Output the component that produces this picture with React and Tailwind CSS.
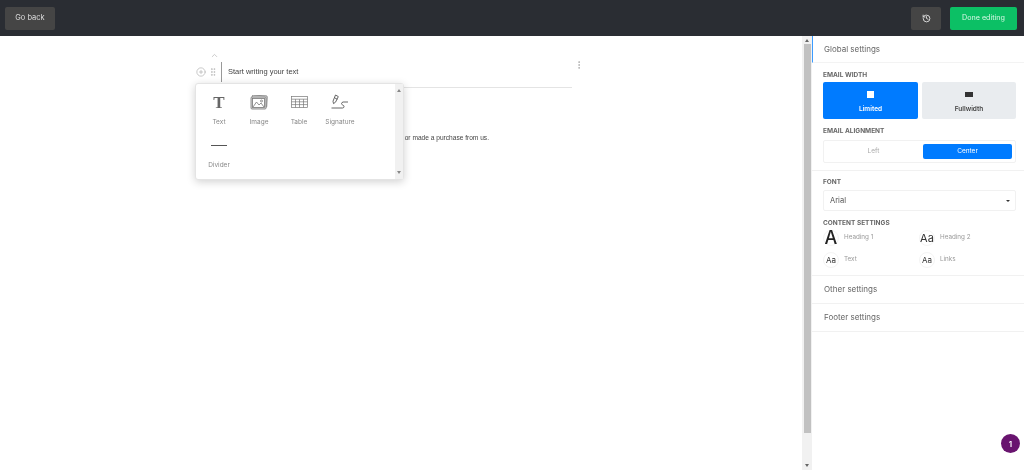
import React from 'react';
import { ChevronUp, CirclePlus, GripVertical, EllipsisVertical, History } from 'lucide-react';

const sans = "font-['Inter',sans-serif]";
const arial = "font-['Liberation_Sans',sans-serif]";

const TextIcon = () => (
  <span className="font-['Liberation_Serif',serif] font-bold text-[17px] leading-none text-[#666]">T</span>
);

const ImageIcon = () => (
  <svg width="18" height="15" viewBox="0 0 18 15" fill="none" stroke="#777" strokeWidth="0.8">
    <rect x="2" y="0.5" width="15" height="11.5" rx="1" transform="rotate(3 9 6)" fill="#ddd" />
    <rect x="1" y="2" width="15" height="12" rx="1" fill="#ddd" />
    <rect x="2.5" y="3.5" width="12" height="9" fill="#fff" />
    <path d="M3 12l3.5-5 2.5 3 2-2 3 4" />
    <circle cx="11.5" cy="6" r="1" />
  </svg>
);

const TableIcon = () => (
  <svg width="17" height="12" viewBox="0 0 17 12" fill="none" stroke="#777" strokeWidth="0.7">
    <rect x="0.5" y="0.5" width="16" height="11" />
    <path d="M0.5 3.2h16M0.5 5.8h16M0.5 8.6h16M4.5 3.2v8.3M8.5 3.2v8.3M12.5 3.2v8.3" />
  </svg>
);

const SignatureIcon = () => (
  <svg width="18" height="16" viewBox="0 0 18 16" fill="none" stroke="#555" strokeWidth="0.9">
    <path d="M4.5 1l2.8 1.6-2.8 5.6-2 1.4-.5-2.4z" />
    <path d="M3.7 3.8l2.6 1.5" />
    <path d="M0.5 14h11c2 0 2-2.5.2-3-1.6-.5-1.6-2.6.4-3H17" />
  </svg>
);

const blocks = [
  { label: 'Text', icon: <TextIcon /> },
  { label: 'Image', icon: <ImageIcon /> },
  { label: 'Table', icon: <TableIcon /> },
  { label: 'Signature', icon: <SignatureIcon />, shift: 'ml-[1px]' },
  { label: 'Divider', icon: <div className="w-4 h-px bg-[#555]" /> },
];

function BlockMenu() {
  return (
    <div className="absolute left-[195px] top-[47px] w-[209px] h-[97px] bg-white rounded-[3px] border border-[#e4e4e4] shadow-[0_2px_8px_rgba(0,0,0,0.18)] flex">
      <div className="flex-1 flex flex-wrap content-start pl-[3px] pt-[9px] gap-y-[8px]">
        {blocks.map((b) => (
          <div key={b.label} className={`w-10 h-[35px] flex flex-col items-center ${b.shift || ''}`}>
            <div className="h-[18px] flex items-center justify-center">{b.icon}</div>
            <span className="mt-[7px] text-[6.5px] leading-[8px] text-[#888] whitespace-nowrap">{b.label}</span>
          </div>
        ))}
      </div>
      <div className="w-2 bg-[#f1f1f1] flex flex-col items-center justify-between py-[5px]">
        <span className="w-0 h-0 border-x-2 border-x-transparent border-b-[3px] border-b-[#888]" />
        <span className="w-0 h-0 border-x-2 border-x-transparent border-t-[3px] border-t-[#888]" />
      </div>
    </div>
  );
}

function Scrollbar() {
  return (
    <div className="w-[10px] bg-[#f1f1f1] flex flex-col items-center shrink-0">
      <div className="h-[8px] flex items-center">
        <span className="w-0 h-0 border-x-[2.5px] border-x-transparent border-b-[3px] border-b-[#666]" />
      </div>
      <div className="w-[7px] h-[389px] bg-[#c1c1c1]" />
      <div className="flex-1" />
      <div className="h-[9px] flex items-center">
        <span className="w-0 h-0 border-x-[2.5px] border-x-transparent border-t-[3px] border-t-[#666]" />
      </div>
    </div>
  );
}

function Canvas() {
  return (
    <main className="relative w-[802px] shrink-0 bg-white">
      <div className="w-[375px] ml-[197px] pt-[16px]">
        <div className="pl-[13px] h-[6px] flex items-center">
          <ChevronUp size={9} className="text-[#bbb]" />
        </div>
        <div className="flex items-center h-[20px] mt-[4px] relative">
          <CirclePlus size={10} className="-ml-[1px] text-[#aaa]" strokeWidth={1.5} />
          <GripVertical size={10} className="ml-[2px] text-[#bbb]" />
          <div className="ml-[3px] w-px h-[20px] bg-[#999]" />
          <span className={`ml-[6px] text-[7.5px] text-[#444] ${arial}`}>Start writing your text</span>
        </div>
        <div className="h-px bg-[#e4e4e4] mt-[5px]" />
        <p className={`mt-[45px] pr-[83px] text-right text-[6.6px] text-[#444] whitespace-nowrap ${arial}`}>
          because you signed up or made a purchase from us.
        </p>
      </div>
      <EllipsisVertical size={10} className="absolute left-[574px] top-[24px] text-[#aaa]" />
      <BlockMenu />
    </main>
  );
}

const styles = [
  { label: 'Heading 1', glyph: 'A', cls: 'text-[18px] font-medium text-[#222]' },
  { label: 'Heading 2', glyph: 'Aa', cls: 'text-[11px] text-[#333]' },
  { label: 'Text', glyph: 'Aa', cls: 'text-[8px] text-[#333]' },
  { label: 'Links', glyph: 'Aa', cls: 'text-[8px] text-[#333]' },
];

const Heading = ({ children }) => (
  <h3 className="text-[6.5px] leading-[8px] font-bold text-[#666]">{children}</h3>
);

function Sidebar() {
  return (
    <aside className="flex-1 bg-white text-[#666]">
      <div className="h-[27px] border-l border-[#3b9bff] border-b border-b-[#f3f3f3] flex items-center pl-[11px] text-[8px] text-[#666]">
        Global settings
      </div>
      <section className="pl-[11px] pr-[13px] pt-[8px] pb-[7px] border-b border-[#f1f1f1]">
        <Heading>EMAIL WIDTH</Heading>
        <div className="flex gap-[4px] mt-[3px]">
          <button className="w-[95px] h-[37px] rounded-[2px] bg-[#007bff] flex flex-col items-center text-white">
            <span className="w-[7px] h-[7px] bg-white mt-[9px]" />
            <span className="text-[6.5px] leading-[8px] font-semibold mt-[7px]">Limited</span>
          </button>
          <button className="w-[94px] h-[37px] rounded-[2px] bg-[#e9ecef] flex flex-col items-center text-[#444]">
            <span className="w-[8px] h-[5px] bg-[#333] mt-[10px]" />
            <span className="text-[6.5px] leading-[8px] font-semibold mt-[8px]">Fullwidth</span>
          </button>
        </div>
        <div className="mt-[8px]"><Heading>EMAIL ALIGNMENT</Heading></div>
        <div className="flex mt-[5px] h-[23px] border border-[#f1f1f1] rounded-[2px] p-[3px] text-[6.5px]">
          <div className="w-[96px] pr-[3px] flex items-center justify-center text-[#aaa]">Left</div>
          <div className="flex-1 rounded-[2px] bg-[#007bff] text-white flex items-center justify-center">Center</div>
        </div>
      </section>
      <section className="pl-[11px] pr-[13px] pt-[7px] pb-[6px] border-b border-[#f1f1f1]">
        <Heading>FONT</Heading>
        <div className="mt-[4px] h-[21px] border border-[#f1f1f1] rounded-[2px] flex items-center justify-between pl-[6px] pr-[5px] text-[7.5px] text-[#555]">
          Arial
          <span className="w-0 h-0 border-x-[2px] border-x-transparent border-t-[2.5px] border-t-[#333]" />
        </div>
        <div className="mt-[8px]"><Heading>CONTENT SETTINGS</Heading></div>
        <div className="grid grid-cols-[96px_1fr] gap-y-[6px] mt-[3px] mb-[1px]">
          {styles.map((s) => (
            <div key={s.label} className="flex items-center h-[16px]">
              <span className={`w-[16px] h-[16px] rounded-full border border-[#f4f4f4] flex items-center justify-center leading-none ${s.cls}`}>
                {s.glyph}
              </span>
              <span className="ml-[5px] text-[6.3px] text-[#999]">{s.label}</span>
            </div>
          ))}
        </div>
      </section>
      <div className="h-[28px] pb-[1px] pl-[12px] flex items-center border-b border-[#f1f1f1] text-[8px]">Other settings</div>
      <div className="h-[28px] pb-[1px] pl-[12px] flex items-center border-b border-[#f1f1f1] text-[8px]">Footer settings</div>
    </aside>
  );
}

export default function App() {
  return (
    <div className={`relative h-[470px] w-[1024px] overflow-hidden flex flex-col will-change-transform ${sans}`}>
      <header className="h-[36px] shrink-0 bg-[#2a2d33] flex items-center justify-between pl-[5px] pr-[7px]">
        <button className="w-[50px] h-[23px] rounded-[2px] bg-[#454545] text-[7.5px] text-[#ddd]">Go back</button>
        <div className="flex items-center gap-[9px]">
          <button className="w-[30px] h-[23px] rounded-[2px] bg-[#454545] flex items-center justify-center text-[#ddd]">
            <History size={9} strokeWidth={2.5} />
          </button>
          <button className="w-[67px] h-[23px] rounded-[2px] bg-[#0cc065] text-[7.2px] text-[#d8f7e6]">Done editing</button>
        </div>
      </header>
      <div className="flex flex-1 min-h-0">
        <Canvas />
        <Scrollbar />
        <Sidebar />
      </div>
      <div className="absolute left-[1001px] top-[434px] w-[19px] h-[19px] rounded-full bg-[#69146f] text-white text-[8px] font-semibold flex items-center justify-center">
        1
      </div>
    </div>
  );
}
